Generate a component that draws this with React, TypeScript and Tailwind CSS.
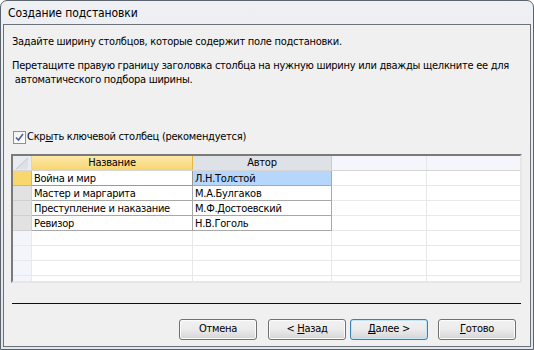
import React from "react";

const FONT = { fontFamily: '"DejaVu Sans Condensed", "DejaVu Sans", sans-serif' };

const rows = [
  { name: "Война и мир", author: "Л.Н.Толстой" },
  { name: "Мастер и маргарита", author: "М.А.Булгаков" },
  { name: "Преступление и наказание", author: "М.Ф.Достоевский" },
  { name: "Ревизор", author: "Н.В.Гоголь" },
];

function WinButton({ children, focused }: { children: React.ReactNode; focused?: boolean }) {
  return (
    <button
      className={
        "w-[78px] h-[21px] rounded-[3px] border text-[11px] text-black flex items-center justify-center bg-gradient-to-b from-[#f2f2f2] via-[#ebebeb] to-[#d5d5d5] " +
        (focused
          ? "border-[#3c7fb1] shadow-[inset_0_0_0_1px_#c4e5f6]"
          : "border-[#707070] shadow-[inset_0_0_0_1px_#fcfcfc]")
      }
    >
      <span className="whitespace-pre">{children}</span>
    </button>
  );
}

export default function App() {
  return (
    <div className="w-[534px] h-[350px] bg-white text-black tracking-[-0.27px]" style={FONT}>
      <div className="w-[534px] h-[350px] border border-[#5b636c] rounded-t-[7px] bg-gradient-to-b from-[#eef0f3] to-[#e2e6ea] flex flex-col">
        <div className="h-[23px] pl-[7px] pt-[1px] flex items-center text-[12px] text-black tracking-[-0.1px]">
          Создание подстановки
        </div>
        <div className="flex-1 mx-[2px] mb-[2px] border border-[#6b7178] bg-[#f0f0f0] flex flex-col pl-[7px] pt-[10px] text-[11px]">
          <p className="leading-[14px] pl-[1px] whitespace-nowrap">
            Задайте ширину столбцов, которые содержит поле подстановки.
          </p>
          <p className="leading-[14px] mt-[10px] pl-[1px] whitespace-nowrap">
            Перетащите правую границу заголовка столбца на нужную ширину или дважды щелкните ее для
            <br />
            &nbsp;автоматического подбора ширины.
          </p>

          <div className="mt-[43px] flex items-center h-[14px] pl-[2px]">
            <span className="w-[13px] h-[13px] border border-[#8e8f8f] bg-gradient-to-br from-[#f0f0f0] to-white flex items-center justify-center">
              <svg width="9" height="9" viewBox="0 0 9 9">
                <path d="M1 4.5 L3.5 7 L8 1" stroke="#4a5f97" strokeWidth="1.6" fill="none" />
              </svg>
            </span>
            <span className="ml-[1px]">
              Скр<span className="underline">ы</span>ть ключевой столбец (рекомендуется)
            </span>
          </div>

          <div className="mt-[10px] w-[511px] h-[129px] border-2 border-t-[#7a7a7a] border-l-[#7a7a7a] border-r-[#e6e6e6] border-b-[#e6e6e6] bg-white overflow-hidden">
            <div className="flex h-[15px] border-b border-[#d5d5d5]">
              <div className="w-[19px] h-full bg-[#e8ebef] border-r border-[#d5d5d5] relative">
                <svg className="absolute inset-0" width="18" height="14" viewBox="0 0 18 14">
                  <path d="M3 13 L15 2 L15 13 Z" fill="#dde1e6" />
                  <path d="M3 13 L15 2" stroke="#c3c8ce" strokeWidth="1" />
                </svg>
              </div>
              <div className="w-[161px] h-full bg-gradient-to-b from-[#fde8a8] to-[#f8d670] border-r border-[#e2b83e] flex items-center justify-center">
                Название
              </div>
              <div className="w-[139px] h-full bg-[#dee2e7] border-r border-[#c8ccd1] flex items-center justify-center">
                Автор
              </div>
              <div className="w-[95px] h-full bg-[#f5f6fb] border-r border-[#e6e6ea]" />
              <div className="flex-1 h-full bg-[#f5f6fb]" />
            </div>
            {rows.map((r, i) => (
              <div key={i} className="flex h-[15px]">
                <div
                  className={
                    "w-[19px] h-full border-r border-b " +
                    (i === 0 ? "bg-[#f8d86c] border-[#e2b83e]" : "bg-[#e2e2e2] border-[#d0d0d0]")
                  }
                />
                <div
                  className={
                    "w-[161px] h-full border-r border-b pl-[2px] flex items-center leading-none " +
                    (i === 0 ? "bg-white border-[#9a9a9a]" : "bg-white border-[#a8a8a8]")
                  }
                >
                  {r.name}
                </div>
                <div
                  className={
                    "w-[139px] h-full border-r border-b border-[#a8a8a8] pl-[2px] flex items-center leading-none " +
                    (i === 0 ? "bg-[#b6d6fb]" : "bg-white")
                  }
                >
                  {r.author}
                </div>
                <div className="w-[95px] h-full border-r border-b border-[#e8e8e8]" />
                <div className="flex-1 h-full border-b border-[#e8e8e8]" />
              </div>
            ))}
            {[0, 1, 2, 3, 4].map((k) => (
              <div key={k} className="flex h-[15px]">
                <div className="w-[19px] h-full bg-[#f4f5fb] border-r border-b border-[#e8e8ee]" />
                <div className="w-[161px] h-full border-r border-b border-[#e8e8e8]" />
                <div className="w-[139px] h-full border-r border-b border-[#e8e8e8]" />
                <div className="w-[95px] h-full border-r border-b border-[#e8e8e8]" />
                <div className="flex-1 h-full border-b border-[#e8e8e8]" />
              </div>
            ))}
          </div>

          <div className="mt-[20px] ml-[1px] w-[509px] h-px bg-[#101010]" />

          <div className="mt-[15px] flex pl-[168px]">
            <WinButton>Отмена</WinButton>
            <div className="ml-[11px]">
              <WinButton>
                {"< "}
                <span className="underline">Н</span>азад
              </WinButton>
            </div>
            <div className="ml-[4px]">
              <WinButton focused>
                <span className="underline">Д</span>
                {"алее >"}
              </WinButton>
            </div>
            <div className="ml-[10px]">
              <WinButton>
                <span className="underline">Г</span>отово
              </WinButton>
            </div>
          </div>
        </div>
      </div>
    </div>
  );
}
